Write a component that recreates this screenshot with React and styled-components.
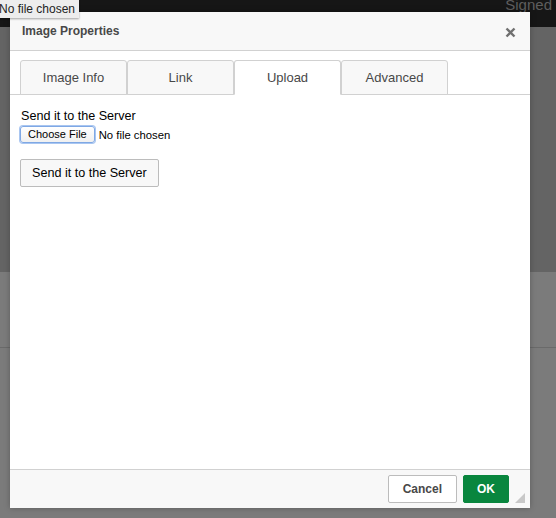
import React from 'react';
import styled, { createGlobalStyle } from 'styled-components';

const GlobalStyle = createGlobalStyle`
  html, body {
    margin: 0;
    padding: 0;
    width: 556px;
    height: 518px;
    overflow: hidden;
    font-family: "Liberation Sans", Arial, sans-serif;
  }
`;

const Page = styled.div`
  position: relative;
  width: 556px;
  height: 518px;
  display: flex;
  flex-direction: column;
  background: #7b7b7b;
  overflow: hidden;
`;

const TopBar = styled.div`
  height: 27px;
  background: #161616;
  display: flex;
  justify-content: flex-end;
  align-items: flex-start;
  overflow: hidden;
`;

const SignedText = styled.span`
  color: #5e5e5e;
  font-size: 15px;
  line-height: 15px;
  margin-top: -3px;
  margin-right: 4px;
`;

const DimBand = styled.div`
  height: 245px;
  background: #646464;
`;

const DimRow = styled.div`
  height: 75px;
  border-bottom: 1px solid #6a6a6a;
`;

const Tooltip = styled.div`
  position: absolute;
  left: -1px;
  top: 0;
  height: 18px;
  padding: 0 4px 0 0;
  background: #ededed;
  color: #222;
  font-size: 12px;
  line-height: 18px;
  box-shadow: 0 1px 2px rgba(0, 0, 0, 0.35);
  z-index: 5;
`;

const Dialog = styled.div`
  position: absolute;
  left: 10px;
  top: 12px;
  width: 520px;
  height: 496px;
  background: #fff;
  display: flex;
  flex-direction: column;
  box-shadow: 0 0 6px rgba(0, 0, 0, 0.25);
`;

const Header = styled.div`
  height: 38px;
  background: #f8f8f8;
  border-bottom: 1px solid #d1d1d1;
  display: flex;
  align-items: center;
  justify-content: space-between;
  padding: 0 14px 0 12px;
`;

const Title = styled.span`
  font-size: 12px;
  font-weight: bold;
  color: #484848;
`;

const Close = styled.svg`
  width: 11px;
  height: 11px;
  margin-top: 3px;
`;

const TabStrip = styled.div`
  display: flex;
  padding: 9px 10px 0;
  border-bottom: 1px solid #d1d1d1;
`;

const Tab = styled.div`
  box-sizing: border-box;
  width: 107px;
  height: 35px;
  margin-bottom: -1px;
  border: 1px solid #d1d1d1;
  border-bottom: ${p => (p.$active ? '1px solid #fff' : '1px solid #d1d1d1')};
  border-radius: 3px 3px 0 0;
  background: ${p => (p.$active ? '#fff' : '#f8f8f8')};
  color: #484848;
  font-size: 13px;
  display: flex;
  align-items: center;
  justify-content: center;
  padding-bottom: 1px;
`;

const Body = styled.div`
  flex: 1;
  padding: 14px 10px 0 11px;
  display: flex;
  flex-direction: column;
  align-items: flex-start;
`;

const Label = styled.div`
  font-size: 12.6px;
  color: #000;
  line-height: 14px;
`;

const FileRow = styled.div`
  display: flex;
  align-items: center;
  gap: 4px;
  margin-top: 3px;
  margin-left: -1px;
`;

const ChooseButton = styled.div`
  box-sizing: border-box;
  height: 17px;
  padding: 0 7px;
  border-radius: 3px;
  border: 1px solid #7fa8e4;
  box-shadow: 0 0 0 1px #a9c6f1;
  background: linear-gradient(#ffffff, #f0f0f0);
  font-size: 11px;
  line-height: 15px;
  color: #000;
`;

const FileName = styled.span`
  font-size: 11.3px;
  color: #000;
`;

const SendButton = styled.div`
  box-sizing: border-box;
  margin-top: 16px;
  margin-left: -1px;
  height: 28px;
  padding: 0 11px;
  border: 1px solid #bcbcbc;
  border-radius: 2px;
  background: #f8f8f8;
  font-size: 12.6px;
  color: #000;
  display: flex;
  align-items: center;
`;

const Footer = styled.div`
  box-sizing: border-box;
  height: 39px;
  border-top: 1px solid #d1d1d1;
  background: #f8f8f8;
  display: flex;
  justify-content: flex-end;
  align-items: flex-start;
  padding: 5px 21px 0 0;
  gap: 6px;
  position: relative;
`;

const FooterButton = styled.div`
  box-sizing: border-box;
  height: 28px;
  padding: 0 ${p => (p.$primary ? '13px' : '14px')};
  border: 1px solid ${p => (p.$primary ? '#09863e' : '#bcbcbc')};
  border-radius: 2px;
  background: ${p => (p.$primary ? '#09863e' : '#fff')};
  color: ${p => (p.$primary ? '#fff' : '#484848')};
  font-size: 12px;
  font-weight: bold;
  display: flex;
  align-items: center;
`;

const Grip = styled.div`
  position: absolute;
  right: 5px;
  bottom: 5px;
  width: 0;
  height: 0;
  border-left: 10px solid transparent;
  border-bottom: 10px solid #c8c8c8;
`;

const tabs = ['Image Info', 'Link', 'Upload', 'Advanced'];

export default function App() {
  return (
    <>
      <GlobalStyle />
      <Page>
        <TopBar>
          <SignedText>Signed</SignedText>
        </TopBar>
        <DimBand />
        <DimRow />
        <Tooltip>No file chosen</Tooltip>
        <Dialog>
          <Header>
            <Title>Image Properties</Title>
            <Close viewBox="0 0 11 11">
              <path d="M1.5 1.5 L9.5 9.5 M9.5 1.5 L1.5 9.5" stroke="#707070" strokeWidth="2.4" />
            </Close>
          </Header>
          <TabStrip>
            {tabs.map(t => (
              <Tab key={t} $active={t === 'Upload'}>{t}</Tab>
            ))}
          </TabStrip>
          <Body>
            <Label>Send it to the Server</Label>
            <FileRow>
              <ChooseButton>Choose File</ChooseButton>
              <FileName>No file chosen</FileName>
            </FileRow>
            <SendButton>Send it to the Server</SendButton>
          </Body>
          <Footer>
            <FooterButton>Cancel</FooterButton>
            <FooterButton $primary>OK</FooterButton>
            <Grip />
          </Footer>
        </Dialog>
      </Page>
    </>
  );
}
